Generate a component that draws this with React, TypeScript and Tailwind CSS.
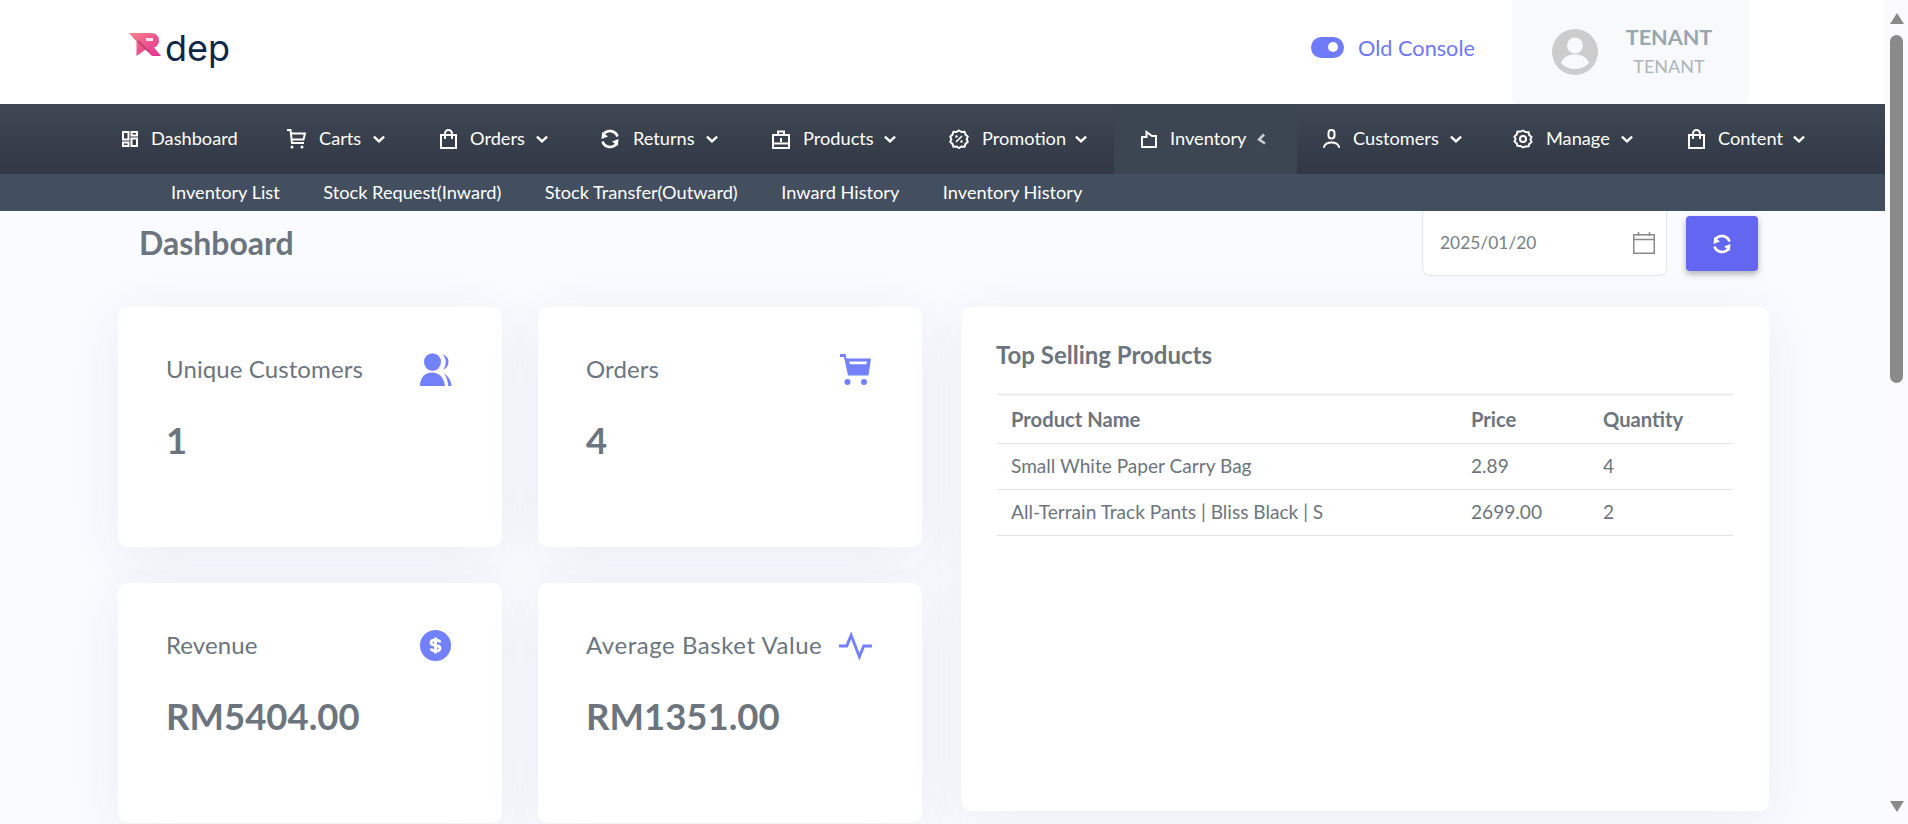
import React from "react";

const S = { fill: "none", stroke: "currentColor", strokeWidth: 2, strokeLinecap: "square" as const, strokeLinejoin: "miter" as const };

const Grid = () => (
  <svg width="16" height="16" viewBox="0 0 16 16" {...S}>
    <rect x="1" y="1" width="5.5" height="7.5" /><rect x="9.5" y="1" width="5.5" height="3.5" />
    <rect x="1" y="11.5" width="5.5" height="3.5" /><rect x="9.5" y="7.5" width="5.5" height="7.5" />
  </svg>
);
const Cart = () => (
  <svg width="19" height="20" viewBox="0 0 19 20" {...S}>
    <path d="M1 1h2.5l1.5 13h11" /><path d="M4 4.5h14l-1.5 6H5" />
    <circle cx="5" cy="18" r="1.5" fill="currentColor" stroke="none" /><circle cx="15" cy="18" r="1.5" fill="currentColor" stroke="none" />
  </svg>
);
const Bag = () => (
  <svg width="17" height="20" viewBox="0 0 17 20" {...S}>
    <rect x="1" y="6" width="15" height="13" /><path d="M5 9V4.5a3.5 3.5 0 0 1 7 0V9" />
  </svg>
);
const Sync = ({ size = 20 }: { size?: number }) => (
  <svg width={size} height={size} viewBox="0 0 20 20" fill="none" stroke="currentColor" strokeWidth="2.6">
    <path d="M17.5 7.5A8 8 0 0 0 3.5 5.2" /><path d="M2.5 12.5a8 8 0 0 0 14 2.3" />
    <path d="M1.500 10 2.200 3 8 7.500z" fill="currentColor" stroke="none" /><path d="M18.500 10 17.800 17 12 12.500z" fill="currentColor" stroke="none" />
  </svg>
);
const Case = () => (
  <svg width="18" height="19" viewBox="0 0 18 19" {...S}>
    <rect x="1" y="5" width="16" height="13" /><path d="M6 5V1.5h6V5" /><path d="M1 13.5h16" /><path d="M9 9v2" />
  </svg>
);
const Promo = () => (
  <svg width="20" height="20" viewBox="0 0 20 20" fill="none" stroke="currentColor" strokeWidth="2">
    <path d="M10 1.500l2.600 1.500 3-.2.900 2.800 2.200 2-1 2.900 1 2.400-2.200 2-.9 2.800-3-.2-2.600 1.500-2.600-1.500-3 .2-.9-2.800-2.200-2 1-2.400-1-2.900 2.200-2 .9-2.800 3 .2z" />
    <path d="M13 7l-6 6" strokeWidth="1.6" /><circle cx="7.500" cy="7.500" r="1.200" fill="currentColor" stroke="none" /><circle cx="12.500" cy="12.500" r="1.200" fill="currentColor" stroke="none" />
  </svg>
);
const Inv = () => (
  <svg width="16" height="18" viewBox="0 0 16 18" {...S}>
    <path d="M1 7h4.500V2L11 6h4v11H1z" />
  </svg>
);
const Person = () => (
  <svg width="17" height="20" viewBox="0 0 17 20" fill="none" stroke="currentColor" strokeWidth="2">
    <rect x="5.500" y="1" width="6" height="8.500" rx="3" /><path d="M1 18c1-3.500 4-4.500 7.500-4.500S15 14.500 16 18" strokeLinecap="round" />
  </svg>
);
const Gear = () => (
  <svg width="20" height="20" viewBox="0 0 20 20" fill="none" stroke="currentColor" strokeWidth="2">
    <path d="M10 1.500l2.600 1.600 3 .1.600 2.800 2.300 2-1 2.500 1 2.500-2.300 2-.6 2.300-3 .1L10 18.500l-2.600-1.600-3-.1-.6-2.300-2.300-2 1-2.500-1-2.500 2.300-2 .6-2.800 3-.1z" />
    <circle cx="10" cy="10" r="3" />
  </svg>
);
const Chevron = ({ open }: { open?: boolean }) =>
  open ? (
    <svg width="11" height="13" viewBox="0 0 11 13" fill="none" stroke="#e5e7eb" strokeWidth="2.500"><path d="M7 1.500 2 6.500l6 4" opacity=".85" /></svg>
  ) : (
    <svg width="13" height="9" viewBox="0 0 13 9" fill="none" stroke="currentColor" strokeWidth="2.600"><path d="M1 1.500l5.500 5 5.500-5" /></svg>
  );

const nav = [
  { label: "Dashboard", icon: <Grid />, box: "w-[17px]", text: "w-[87px]", noChev: true, pad: "pl-[27px] pr-[22px]" },
  { label: "Carts", icon: <Cart />, box: "w-[19px]", text: "w-[42px]", pad: "pl-[27px] pr-[27px]" },
  { label: "Orders", icon: <Bag />, box: "w-[17px]", text: "w-[54px]", pad: "pl-[28px] pr-[27px]" },
  { label: "Returns", icon: <Sync />, box: "w-[20px]", text: "w-[61px]", pad: "pl-[25px] pr-[27px]" },
  { label: "Products", icon: <Case />, box: "w-[18px]", text: "w-[69px]", pad: "pl-[27px] pr-[26px]" },
  { label: "Promotion", icon: <Promo />, box: "w-[20px]", text: "w-[81px]", pad: "pl-[27px] pr-[27px]" },
  { label: "Inventory", icon: <Inv />, box: "w-[16px]", text: "w-[74px]", open: true, pad: "pl-[27px] pr-[29px] bg-[#3c4652]" },
  { label: "Customers", icon: <Person />, box: "w-[17px]", text: "w-[85px]", pad: "pl-[26px] pr-[26px]" },
  { label: "Manage", icon: <Gear />, box: "w-[20px]", text: "w-[63px]", pad: "pl-[25px] pr-[27px]" },
  { label: "Content", icon: <Bag />, box: "w-[17px]", text: "w-[63px]", pad: "pl-[28px] pr-[27px]" },
];

const sub = ["Inventory List", "Stock Request(Inward)", "Stock Transfer(Outward)", "Inward History", "Inventory History"];

const Users = () => (
  <svg width="33" height="33" viewBox="0 0 33 33" fill="#7380fb">
    <ellipse cx="13.500" cy="9" rx="8.500" ry="8.800" />
    <path d="M1 33c0-8.500 5-13.500 12-13.500S25 24.500 26 33z" />
    <path d="M23.500 1.500c4 1 6 4 6 7.500s-2 6.500-5.500 7.800c1.800-2.300 2.700-4.800 2.700-7.800s-1-5.500-3.200-7.500z" />
    <path d="M25 21c4.500 2 7 6.500 7.500 12h-3.200c-.5-5-1.600-8.800-4.300-12z" />
  </svg>
);
const CartFill = () => (
  <svg width="33" height="33" viewBox="0 0 33 33" fill="#7380fb">
    <path d="M1 1h5.500l1 4.500H32l-2.500 17H9L5 4H1z" /><path d="M10 8.500h18l-.6 2.800H11z" fill="#fff" />
    <circle cx="8.500" cy="29" r="3" /><circle cx="25" cy="29" r="3" />
  </svg>
);
const Dollar = () => (
  <svg width="31" height="31" viewBox="0 0 31 31">
    <circle cx="15.500" cy="15.500" r="15.500" fill="#7380fb" />
    <path d="M20 12.500c-.4-1.700-2-2.500-4.500-2.500S11 11 11 12.800s1.600 2.400 4.500 2.700 4.500 1 4.500 2.700-2 2.800-4.500 2.800-4.100-.8-4.500-2.500M15.500 7.500v16" fill="none" stroke="#fff" strokeWidth="2.800" />
  </svg>
);
const Pulse = () => (
  <svg width="34" height="28" viewBox="0 0 34 28" fill="none" stroke="#7380fb" strokeWidth="3">
    <path d="M0 14h8L12.500 3 21 25l4.500-11H34" />
  </svg>
);

function Stat({ label, value, icon, wide }: { label: string; value: string; icon: React.ReactNode; wide?: boolean }) {
  return (
    <div className="h-[240px] rounded-[10px] bg-white pl-[48px] pr-[50px] pt-[45px] shadow-[0_10px_60px_rgba(50,60,100,0.07)]">
      <div className="flex h-[35px] items-center justify-between">
        <span className={`-translate-y-[1px] text-[24px] whitespace-nowrap text-[#6c757d] ${wide ? "tracking-[0.55px]" : "tracking-[0.1px]"}`}>{label}</span>
        <span className="flex w-[33px] items-center justify-center">{icon}</span>
      </div>
      <div className="mt-[30px] text-[36.5px] leading-[46px] font-bold text-[#6c757d]">{value}</div>
    </div>
  );
}

const rows = [
  ["Small White Paper Carry Bag", "2.89", "4"],
  ["All-Terrain Track Pants | Bliss Black | S", "2699.00", "2"],
];

export default function App() {
  return (
    <div className="flex h-[824px] w-full overflow-hidden bg-white font-['Lato',sans-serif]">
      <div className="flex w-[1885px] flex-col">
        <header className="flex h-[104px] shrink-0 items-center bg-white pr-[136px] pl-[129px]">
          <div className="flex items-start">
            <svg width="33" height="23" viewBox="0 0 33 23" className="mt-[1px]">
              <defs>
                <linearGradient id="lg" x1="0" y1="0" x2="1" y2="1">
                  <stop offset="0" stopColor="#f5848a" /><stop offset="1" stopColor="#e52c92" />
                </linearGradient>
              </defs>
              <path d="M0 0H22c5 0 8 3 8 7.500 0 3.500-2 6-5 7L32 23H23l-6.500-6.500L7.500 23V8.500z" fill="url(#lg)" />
              <path d="M10 7l11 12-3.500-1L8 9z" fill="#8d2a5e" opacity=".45" />
              <rect x="17" y="5" width="7" height="3" fill="#fff" opacity=".85" />
            </svg>
            <span className="-mt-[9px] ml-[3px] text-[36px] leading-[50px] font-normal text-[#0e2748] font-['Inter',sans-serif]">dep</span>
          </div>
          <div className="ml-auto flex -translate-y-[4px] items-center">
            <div className="relative h-[21px] w-[33px] rounded-full bg-[#6f7bfb]">
              <span className="absolute top-[5px] right-[6px] h-[10px] w-[10px] rounded-full bg-white" />
            </div>
            <span className="ml-[14px] text-[21.7px] text-[#6f78f8]">Old Console</span>
          </div>
          <div className="ml-[37px] flex h-[104px] w-[237px] items-center rounded-b-[6px] bg-[#f8f9fb] pl-[40px]">
            <svg width="46" height="46" viewBox="0 0 46 46" className="shrink-0">
              <circle cx="23" cy="23" r="23" fill="#cccccc" />
              <circle cx="23" cy="16.500" r="8" fill="#f8f9fb" />
              <path d="M9 34c2-6 8-8.500 14-8.500S35 28 37 34c-3.500 4-8.500 6-14 6s-10.500-2-14-6z" fill="#f8f9fb" />
            </svg>
            <div className="ml-[24px] flex w-[94px] -translate-y-[1px] flex-col items-center">
              <span className="text-[21.6px] leading-[30px] font-bold text-[#98a6ad]">TENANT</span>
              <span className="text-[18px] leading-[28px] text-[#adb5bd]">TENANT</span>
            </div>
          </div>
        </header>

        <nav className="flex h-[70px] shrink-0 items-stretch bg-gradient-to-b from-[#3e4753] to-[#323845] pl-[94px] text-[18.2px] text-white">
          {nav.map((n) => (
            <div key={n.label} className={`flex items-center ${n.pad}`}>
              <span className={`flex shrink-0 justify-center ${n.box}`}>{n.icon}</span>
              <span className={`ml-[13px] whitespace-nowrap ${n.text}`}>{n.label}</span>
              {!n.noChev && (
                <span className="ml-[12px] flex w-[12px] justify-center">
                  <Chevron open={n.open} />
                </span>
              )}
            </div>
          ))}
        </nav>

        <div className="flex h-[37px] shrink-0 items-center gap-[43.5px] bg-[#434f5f] pl-[171px] text-[18.2px] text-white">
          {sub.map((s) => (
            <span key={s} className="whitespace-nowrap">{s}</span>
          ))}
        </div>

        <main className="min-h-0 flex-1 bg-[#fafbff] pl-[118px]">
          <div className="flex h-[96px] items-start pr-[127px]">
            <h1 className="mt-[12px] ml-[21px] text-[32px] leading-[40px] font-bold text-[#6c757d]">Dashboard</h1>
            <div className="ml-auto flex h-[65px] w-[245px] items-center justify-between rounded-b-[8px] border border-t-0 border-[#e3e6ea] bg-white pr-[11px] pl-[17px]">
              <span className="text-[17.4px] text-[#787f85]">2025/01/20</span>
              <svg width="22" height="22" viewBox="0 0 22 22" fill="none" stroke="#8a8a8a" strokeWidth="1.500">
                <rect x=".75" y="2.750" width="20.500" height="18.500" /><path d="M.75 7.500h20.500M5.500 0v4M16.500 0v4" />
              </svg>
            </div>
            <button className="mt-[5px] ml-[19px] flex h-[55px] w-[72px] items-center justify-center rounded-[4px] bg-[#6366f1] text-white shadow-[0_3px_6px_rgba(0,0,0,0.3)]">
              <Sync size={20} />
            </button>
          </div>

          <div className="flex items-start">
            <div className="grid w-[804px] grid-cols-[384px_384px] gap-[36px]">
              <Stat label="Unique Customers" value="1" icon={<Users />} />
              <Stat label="Orders" value="4" icon={<CartFill />} />
              <Stat label="Revenue" value="RM5404.00" icon={<Dollar />} />
              <Stat label="Average Basket Value" value="RM1351.00" icon={<Pulse />} wide />
            </div>
            <section className="ml-[39px] h-[504px] w-[808px] rounded-[10px] bg-white px-[36px] pt-[32px] shadow-[0_10px_60px_rgba(50,60,100,0.07)]">
              <h2 className="-ml-[1px] text-[24px] leading-[32px] font-bold text-[#6c757d]">Top Selling Products</h2>
              <div className="mt-[22px] border-t-[3px] border-[#f0f1f5] text-[#6c757d]">
                <div className="grid h-[48px] grid-cols-[460px_132px_1fr] items-center border-b border-[#dee2e6] pl-[14px] text-[20.2px] font-bold">
                  <span>Product Name</span><span>Price</span><span>Quantity</span>
                </div>
                {rows.map((r) => (
                  <div key={r[0]} className="grid h-[46px] grid-cols-[460px_132px_1fr] items-center border-b border-[#dee2e6] pl-[14px] text-[19.1px]">
                    <span className="whitespace-nowrap">{r[0]}</span><span>{r[1]}</span><span>{r[2]}</span>
                  </div>
                ))}
              </div>
            </section>
          </div>
        </main>
      </div>

      <aside className="flex w-[23px] shrink-0 flex-col items-center bg-[#fbfbfe]">
        <svg width="14" height="11" viewBox="0 0 14 11" className="mt-[13px]" fill="#8a8a8a"><path d="M7 0l7 11H0z" /></svg>
        <div className="mt-[11px] h-[348px] w-[13px] rounded-full bg-[#8a8a8a]" />
        <svg width="14" height="11" viewBox="0 0 14 11" className="mt-auto mb-[12px]" fill="#8a8a8a"><path d="M0 0h14L7 11z" /></svg>
      </aside>
    </div>
  );
}
